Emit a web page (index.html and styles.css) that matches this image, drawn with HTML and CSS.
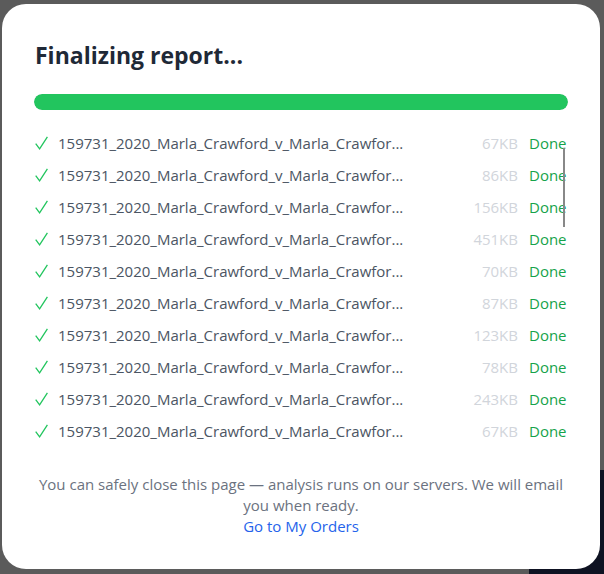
FILE: index.html
```html
<!DOCTYPE html>
<html lang="en">
<head>
<meta charset="utf-8">
<title>Finalizing report</title>
<link rel="stylesheet" href="styles.css">
</head>
<body>
<div class="backdrop-panel"></div>
<div class="modal">
  <h1 class="title">Finalizing report...</h1>
  <div class="progress"><div class="progress-fill" style="width:100%"></div></div>
  <ul class="files">
    <li class="file"><svg class="check" viewBox="0 0 13 14"><path d="M0.7 7.6 L4.6 12.8 L12.4 0.9"/></svg><span class="name">159731_2020_Marla_Crawford_v_Marla_Crawfor...</span><span class="size">67KB</span><span class="status">Done</span></li>
    <li class="file"><svg class="check" viewBox="0 0 13 14"><path d="M0.7 7.6 L4.6 12.8 L12.4 0.9"/></svg><span class="name">159731_2020_Marla_Crawford_v_Marla_Crawfor...</span><span class="size">86KB</span><span class="status">Done</span></li>
    <li class="file"><svg class="check" viewBox="0 0 13 14"><path d="M0.7 7.6 L4.6 12.8 L12.4 0.9"/></svg><span class="name">159731_2020_Marla_Crawford_v_Marla_Crawfor...</span><span class="size">156KB</span><span class="status">Done</span></li>
    <li class="file"><svg class="check" viewBox="0 0 13 14"><path d="M0.7 7.6 L4.6 12.8 L12.4 0.9"/></svg><span class="name">159731_2020_Marla_Crawford_v_Marla_Crawfor...</span><span class="size">451KB</span><span class="status">Done</span></li>
    <li class="file"><svg class="check" viewBox="0 0 13 14"><path d="M0.7 7.6 L4.6 12.8 L12.4 0.9"/></svg><span class="name">159731_2020_Marla_Crawford_v_Marla_Crawfor...</span><span class="size">70KB</span><span class="status">Done</span></li>
    <li class="file"><svg class="check" viewBox="0 0 13 14"><path d="M0.7 7.6 L4.6 12.8 L12.4 0.9"/></svg><span class="name">159731_2020_Marla_Crawford_v_Marla_Crawfor...</span><span class="size">87KB</span><span class="status">Done</span></li>
    <li class="file"><svg class="check" viewBox="0 0 13 14"><path d="M0.7 7.6 L4.6 12.8 L12.4 0.9"/></svg><span class="name">159731_2020_Marla_Crawford_v_Marla_Crawfor...</span><span class="size">123KB</span><span class="status">Done</span></li>
    <li class="file"><svg class="check" viewBox="0 0 13 14"><path d="M0.7 7.6 L4.6 12.8 L12.4 0.9"/></svg><span class="name">159731_2020_Marla_Crawford_v_Marla_Crawfor...</span><span class="size">78KB</span><span class="status">Done</span></li>
    <li class="file"><svg class="check" viewBox="0 0 13 14"><path d="M0.7 7.6 L4.6 12.8 L12.4 0.9"/></svg><span class="name">159731_2020_Marla_Crawford_v_Marla_Crawfor...</span><span class="size">243KB</span><span class="status">Done</span></li>
    <li class="file"><svg class="check" viewBox="0 0 13 14"><path d="M0.7 7.6 L4.6 12.8 L12.4 0.9"/></svg><span class="name">159731_2020_Marla_Crawford_v_Marla_Crawfor...</span><span class="size">67KB</span><span class="status">Done</span></li>
  </ul>
  <div class="scroll-thumb"></div>
  <p class="note">You can safely close this page — analysis runs on our servers. We will email you when ready.<br><a class="link" href="#">Go to My Orders</a></p>
</div>
</body>
</html>
```

FILE: styles.css
```css
* { box-sizing: border-box; }
html, body { margin: 0; padding: 0; }
body {
  width: 604px;
  height: 574px;
  overflow: hidden;
  background: #5b5b5b;
  font-family: "Segoe UI", "Open Sans", "Noto Sans", sans-serif;
  position: relative;
}
.backdrop-panel {
  position: absolute;
  left: 529px;
  top: 470px;
  right: 0;
  bottom: 0;
  background: #0e1222;
}
.modal {
  position: absolute;
  left: 2px;
  top: 4px;
  width: 598px;
  height: 565px;
  background: #ffffff;
  border-radius: 24px;
  padding: 35px 32px 32px 32px;
  display: flex;
  flex-direction: column;
}
.title {
  margin: 0 0 23px 1px;
  font-size: 23px;
  line-height: 32px;
  font-weight: 700;
  color: #1f2937;
}
.progress {
  height: 16px;
  border-radius: 8px;
  background: #e5e7eb;
  overflow: hidden;
}
.progress-fill {
  height: 100%;
  background: #22c55e;
  border-radius: 8px;
}
.files {
  list-style: none;
  margin: 17px 0 0 0;
  padding: 0;
}
.file {
  display: flex;
  align-items: center;
  height: 32px;
  font-size: 15px;
}
.check {
  width: 13px;
  height: 14px;
  margin-left: 1px;
  margin-right: 10px;
  flex: none;
  fill: none;
  stroke: #22c55e;
  stroke-width: 1.3;
}
.name {
  flex: 1;
  color: #4b5563;
  white-space: nowrap;
  overflow: hidden;
}
.size {
  color: #d1d5db;
  margin-right: 11px;
}
.status {
  color: #16a34a;
  width: 39px;
}
.scroll-thumb {
  position: absolute;
  left: 561px;
  top: 144px;
  width: 2px;
  height: 79px;
  background: #888888;
}
.note {
  margin: 27px 0 0 0;
  text-align: center;
  font-size: 15px;
  line-height: 21px;
  color: #6b7280;
}
.link {
  color: #2563eb;
  text-decoration: none;
}
```
